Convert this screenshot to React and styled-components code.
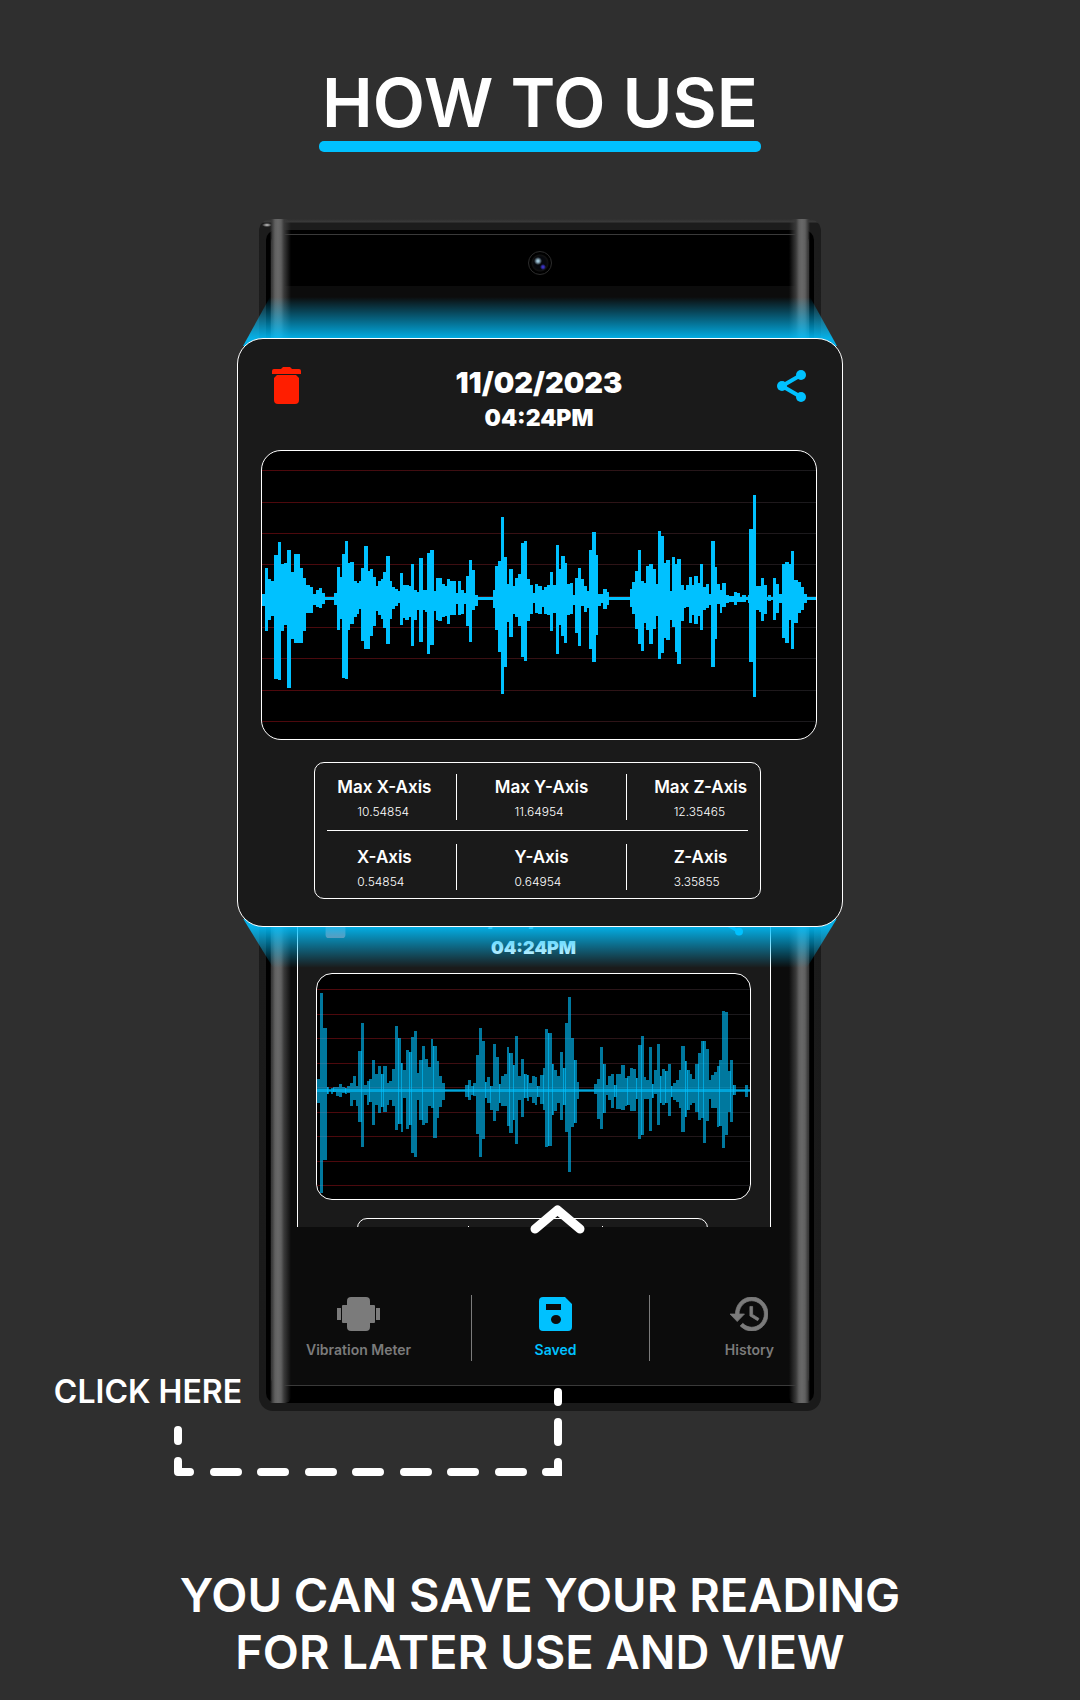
import React from "react";
import styled, { createGlobalStyle, css } from "styled-components";

const CYAN = "#00c1ff";

const GlobalStyle = createGlobalStyle`
  *, *::before, *::after { box-sizing: border-box; }
  body {
    margin: 0;
    background: #2f2f2f;
    color: #fff;
    font-family: Inter, "Liberation Sans", sans-serif;
  }
  h1, h2, p, dl, dd { margin: 0; }
`;

/* Each sample: left edge, top, bottom. The trace is centred on y = 475. */
const READING = [
  [93,462,498],[105,384,573],[114,417,540],[123,423,528],[132,345,717],[144,306,720],[153,372,573],[162,369,555],
  [171,330,744],[183,396,597],[192,342,609],[210,384,609],[219,414,573],[228,435,519],[240,441,519],[249,462,495],
  [258,450,501],[267,444,504],[276,459,492],[285,471,480],[312,459,495],[321,381,570],[330,411,537],[336,342,714],
  [345,303,717],[354,369,570],[361,366,552],[372,423,531],[381,429,522],[387,423,507],[393,384,603],[402,318,627],
  [414,393,627],[420,387,588],[429,411,558],[438,438,513],[444,423,525],[453,417,537],[459,396,564],[468,348,612],
  [480,423,537],[486,441,507],[495,447,498],[504,453,489],[510,399,555],[519,435,534],[525,435,540],[537,438,531],
  [543,372,618],[552,450,540],[561,456,510],[567,354,606],[579,450,510],[585,450,516],[591,339,642],[600,330,615],
  [612,453,513],[618,414,540],[624,414,543],[636,432,531],[645,438,528],[651,417,552],[660,423,525],[678,459,492],
  [684,423,525],[693,450,522],[702,459,492],[708,408,558],[717,360,606],[726,390,510],[735,465,498],[744,471,480],
  [789,450,504],[795,378,570],[804,363,636],[813,231,762],[822,351,681],[831,432,546],[837,387,591],[849,438,522],
  [855,414,531],[864,402,558],[873,309,651],[882,303,663],[891,417,543],[900,435,522],[909,459,489],[915,432,519],
  [924,438,522],[933,450,501],[939,441,522],[948,435,525],[957,396,573],[966,435,519],[975,315,642],[984,387,555],
  [990,348,588],[999,348,609],[1002,369,609],[1008,432,525],[1017,429,522],[1026,465,495],[1032,414,579],[1041,384,618],
  [1050,417,498],[1059,438,516],[1068,453,504],[1074,330,627],[1083,276,666],[1095,345,585],[1101,462,498],[1110,462,489],
  [1116,447,507],[1128,456,495],[1134,471,480],[1197,447,501],[1203,426,522],[1212,393,567],[1221,330,612],[1230,423,633],
  [1239,429,549],[1245,378,570],[1254,372,612],[1266,387,567],[1275,432,528],[1281,273,657],[1290,288,639],[1299,369,594],
  [1305,360,600],[1317,453,540],[1323,351,561],[1332,372,636],[1338,357,672],[1350,435,543],[1359,450,504],[1365,435,501],
  [1374,411,549],[1383,435,525],[1389,408,552],[1401,429,528],[1407,372,570],[1416,441,510],[1425,432,504],[1434,462,495],
  [1440,303,681],[1452,381,597],[1458,432,492],[1467,450,519],[1473,429,501],[1485,465,489],[1494,468,486],[1509,456,495],
  [1518,459,486],[1527,471,486],[1533,465,486],[1545,471,480],[1551,465,489],[1554,267,666],[1566,165,771],[1575,438,510],
  [1584,438,516],[1590,414,543],[1599,435,522],[1608,471,480],[1611,465,483],[1620,471,480],[1626,414,540],[1635,432,519],
  [1644,462,489],[1653,372,594],[1662,366,609],[1674,372,540],[1680,333,627],[1689,420,549],[1701,426,519],[1710,441,510],
  [1719,462,489],[1728,471,480],[1761,471,480],
];

/* Same layout, centred on y = 541. */
const OLDER_READING = [
  [261,507,579],[270,249,849],[279,354,750],[291,531,552],[297,541,543],[303,534,552],[309,531,546],[318,531,558],
  [327,522,561],[336,531,549],[345,534,552],[351,528,549],[360,519,588],[369,498,570],[378,528,588],[384,423,636],
  [393,339,711],[402,525,555],[411,513,585],[417,507,576],[426,450,645],[435,492,585],[444,468,609],[453,492,591],
  [459,468,606],[471,519,585],[477,513,570],[486,477,588],[495,348,660],[504,384,642],[513,459,666],[519,480,564],
  [528,420,657],[537,426,645],[543,381,729],[552,363,741],[561,489,570],[567,450,630],[576,408,645],[585,447,639],
  [594,471,588],[603,387,594],[609,408,684],[621,453,624],[627,498,591],[636,519,570],[645,541,543],[705,525,561],
  [714,510,570],[723,528,555],[729,519,558],[738,435,672],[747,354,741],[756,393,687],[765,516,564],[771,501,579],
  [780,528,600],[789,402,633],[798,441,603],[807,522,579],[813,498,588],[822,492,588],[831,411,648],[837,429,669],
  [849,465,630],[855,378,702],[864,498,570],[873,447,621],[882,492,564],[891,495,573],[897,519,561],[906,498,579],
  [915,501,585],[921,528,561],[930,495,582],[939,474,600],[945,357,711],[954,369,708],[966,462,615],[972,480,603],
  [981,498,579],[990,426,630],[999,474,585],[1005,339,666],[1014,261,786],[1023,384,651],[1032,450,639],[1041,516,567],
  [1047,541,543],[1092,522,552],[1101,507,627],[1110,411,657],[1119,462,609],[1128,525,555],[1134,498,570],[1143,492,594],
  [1152,525,561],[1158,492,597],[1173,465,600],[1185,504,588],[1191,498,585],[1200,474,603],[1209,477,603],[1218,504,567],
  [1224,405,687],[1233,378,675],[1242,501,567],[1248,510,567],[1257,411,663],[1266,522,564],[1272,480,552],[1281,402,645],
  [1290,498,579],[1296,477,585],[1305,483,579],[1314,462,618],[1323,528,561],[1329,519,570],[1338,510,576],[1347,480,594],
  [1353,408,666],[1365,453,621],[1371,480,600],[1380,492,585],[1386,507,579],[1395,462,606],[1404,429,630],[1413,393,624],
  [1419,393,699],[1428,417,633],[1437,510,567],[1443,495,594],[1452,486,594],[1461,468,651],[1467,450,648],[1476,303,714],
  [1485,306,675],[1494,483,606],[1500,450,636],[1509,525,555],[1518,541,543],[1545,525,561],[1554,541,543],[1560,541,543],
];

/* Left edges of the strips where two neighbouring samples overlap. */
const OVERLAPS = new Set([
  291,309,345,393,417,453,459,504,513,537,543,576,609,714,729,765,780,807,837,849,882,891,921,939,954,966,999,1005,1032,
  1119,1152,1158,1191,1218,1233,1266,1290,1305,1323,1365,1371,1404,1419,1467,1500,1509,
]);

const tracePath = (samples) =>
  samples
    .slice(0, -1)
    .map(([x, top, bottom], i) => `M${x} ${top}H${samples[i + 1][0]}V${bottom}H${x}Z`)
    .join("");

const overlapPath = (samples) =>
  samples
    .map(([x, top, bottom], i) => {
      if (!i || !OVERLAPS.has(x)) return "";
      const [, prevTop, prevBottom] = samples[i - 1];
      return `M${x} ${Math.max(top, prevTop)}h3V${Math.min(bottom, prevBottom)}h-3Z`;
    })
    .join("");

const Page = styled.main`
  display: flex;
  flex-direction: column;
  align-items: center;
  padding: 64px 0 20px;
  overflow-x: hidden;
`;

const Title = styled.h1`
  padding: 0 3px;
  font-size: 68px;
  font-weight: 600;
  line-height: 77px;
  &::after {
    content: "";
    display: block;
    height: 11px;
    margin: 0 -3px;
    border-radius: 5px;
    background: ${CYAN};
  }
`;

const Stage = styled.section`
  position: relative;
  display: flex;
  justify-content: center;
  width: 100%;
  margin-top: 67px;
`;

const rail = css`
  content: "";
  position: absolute;
  top: 0;
  bottom: 8px;
  width: 25px;
  background: linear-gradient(90deg, transparent 4px, #3a3a3a 6px, #606060 9px, #686868 12px, #606060 15px, #3a3a3a 18px, transparent);
  border-radius: 6px;
`;

const Phone = styled.div`
  position: relative;
  width: 562px;
  max-width: 100%;
  padding: 11px 7px 8px;
  border-radius: 12px 12px 14px 14px;
  background:
    radial-gradient(ellipse 5px 2px at 8px 6px, #d0d0d0, transparent),
    linear-gradient(#2f2f2f, #3a3a3a 3px, #1c1c1c 4px, #1a1a1a);
  &::before { ${rail} left: 7px; }
  &::after { ${rail} right: 7px; transform: scaleX(-1); }
`;

const Face = styled.div`
  padding: 4px 5px 17px;
  border-radius: 10px;
  background: #000;
`;

const Screen = styled.div`
  border: 1px solid #3a3a3a;
  border-radius: 8px;
  background: #0c0c0c;
  overflow: hidden;
`;

const CameraBar = styled.div`
  display: flex;
  justify-content: center;
  align-items: center;
  height: 51px;
  padding-top: 4px;
  background: #000;
`;

const Camera = styled.span`
  width: 24px;
  height: 24px;
  border: 1px solid #2c2c2c;
  border-radius: 50%;
  background:
    radial-gradient(circle at 9px 9px, #9fc4d8 1px, transparent 4px),
    radial-gradient(circle at 14px 15px, #3a32c0 1px, transparent 3px),
    radial-gradient(circle, #06080d 6px, #111 8px, #000 9px);
`;

const SavedList = styled.div`
  height: 941px;
  padding: 599px 37px 0 25px;
  overflow: hidden;
`;

const Card = styled.article`
  position: relative;
  padding: ${(p) => (p.$compact ? "21px 19px 22px 18px" : "28px 25px 27px 23px")};
  border: 1px solid #fff;
  border-radius: ${(p) => (p.$compact ? 20 : 26)}px;
  background: #1a1a1a;
`;

const CardHeader = styled.header`
  display: flex;
  justify-content: space-between;
  align-items: flex-start;
  padding: ${(p) => (p.$compact ? "0 8px 14px" : "0 11px 18px")};
`;

const IconButton = styled.button`
  display: block;
  padding: 0;
  border: 0;
  background: none;
  color: ${(p) => p.$color};
  cursor: pointer;
  svg {
    display: block;
    width: ${(p) => (p.$compact ? 23 : 29)}px;
    height: ${(p) => (p.$compact ? 31 : 37)}px;
  }
`;

const Stamp = styled.div`
  display: flex;
  flex-direction: column;
  align-items: center;
  gap: 5px;
  font-weight: 900;
`;

const DateText = styled.h2`
  font-size: ${(p) => (p.$compact ? 23 : 29)}px;
  line-height: ${(p) => (p.$compact ? 25 : 32)}px;
  font-weight: inherit;
`;

const TimeText = styled.p`
  font-size: ${(p) => (p.$compact ? 18 : 23)}px;
  line-height: ${(p) => (p.$compact ? 22 : 28)}px;
`;

const Plot = styled.div`
  border: 1px solid #fff;
  border-radius: ${(p) => (p.$compact ? 16 : 20)}px;
  background: #000;
  overflow: hidden;
  svg { display: block; width: 100%; height: auto; }
`;

const Axes = styled.dl`
  width: ${(p) => (p.$compact ? 351 : 447)}px;
  max-width: 100%;
  margin: ${(p) => (p.$compact ? "18px 0 0 41px" : "22px 0 0 53px")};
  padding: ${(p) => (p.$compact ? "7px 9px" : "11px 12px 8px")};
  border: 1px solid #fff;
  border-radius: 10px;
`;

const AxisRow = styled.div`
  display: grid;
  grid-template-columns: 130fr 171fr 121fr;
  min-height: 36px;
  & + & {
    margin-top: 10px;
    padding-top: 13px;
    border-top: 1px solid #fff;
  }
`;

const Axis = styled.div`
  display: flex;
  flex-direction: column;
  align-items: center;
  gap: 4px;
  white-space: nowrap;
  &:not(:last-child) { border-right: 1px solid #fff; }
  &:first-child { padding-right: 14px; }
  &:last-child { padding-left: 26px; }
`;

const AxisName = styled.dt`
  font-size: 17px;
  line-height: 26px;
  font-weight: 600;
`;

const AxisValue = styled.dd`
  width: 54px;
  font-size: 12px;
  line-height: 16px;
  font-weight: 300;
`;

const Nav = styled.nav`
  display: grid;
  grid-template-columns: 199fr 178fr 159fr;
  padding: 68px 0 24px;
`;

const NavItem = styled.a`
  display: flex;
  flex-direction: column;
  align-items: ${(p) => p.$align};
  height: 66px;
  padding: ${(p) => (p.$active ? "2px 39px 0 29px" : "2px 34px 0")};
  color: ${(p) => (p.$active ? CYAN : "#7b7b7b")};
  font-size: 14px;
  line-height: 18px;
  font-weight: 600;
  text-decoration: none;
  & + & { border-left: 1px solid #7b7b7b; }
`;

const NavLabel = styled.span`
  display: flex;
  flex-direction: column;
  align-items: center;
  gap: 10px;
  white-space: nowrap;
  svg { height: 34px; }
`;

const Popup = styled.div`
  position: absolute;
  top: 119px;
  width: 606px;
  max-width: 100%;
`;

const Glow = styled.div`
  position: absolute;
  left: 6px;
  right: 6px;
  height: 49px;
  ${(p) =>
    p.$below
      ? css`
          bottom: -41px;
          background: linear-gradient(rgba(0, 193, 255, 0.88) 8px, rgba(0, 193, 255, 0));
          clip-path: polygon(0 0, 100% 0, calc(100% - 30px) 100%, 30px 100%);
        `
      : css`
          top: -41px;
          background: linear-gradient(rgba(0, 193, 255, 0), rgba(0, 193, 255, 0.88) 41px);
          clip-path: polygon(27px 0, calc(100% - 27px) 0, 100% 100%, 0 100%);
        `}
`;

const Callout = styled.div`
  position: absolute;
  top: 983px;
  left: calc(50% - 486px);
`;

const CalloutLabel = styled.p`
  position: absolute;
  top: 170px;
  right: 352px;
  font-size: 32px;
  line-height: 40px;
  font-weight: 600;
  white-space: nowrap;
`;

const Caption = styled.p`
  margin-top: 155px;
  font-size: 47px;
  line-height: 57px;
  font-weight: 600;
  text-align: center;
`;

const TrashIcon = () => (
  <svg viewBox="0 0 29 37" preserveAspectRatio="none" fill="currentColor" aria-hidden="true">
    <path d="M2 2H9L11 0H18L20 2H27Q29 2 29 4V7H0V4Q0 2 2 2Z" />
    <path d="M5 8H24L27 11V33Q27 37 23 37H6Q2 37 2 33V11Z" />
  </svg>
);

const ShareIcon = () => (
  <svg viewBox="0 0 29 37" fill="currentColor" aria-hidden="true">
    <path d="M24 8L5 19L24 30" fill="none" stroke="currentColor" strokeWidth="4" />
    <circle cx="24" cy="8" r="5" />
    <circle cx="5" cy="19" r="5" />
    <circle cx="24" cy="30" r="5" />
  </svg>
);

const VibrationIcon = () => (
  <svg width="43" viewBox="0 0 43 34" fill="currentColor" aria-hidden="true">
    <rect x="10" width="23" height="34" rx="4" />
    <rect x="5" y="8" width="33" height="18" rx="1" />
    <rect y="11" width="4" height="12" />
    <rect x="39" y="11" width="4" height="12" />
  </svg>
);

const SaveIcon = () => (
  <svg width="33" viewBox="0 0 33 34" fill="currentColor" fillRule="evenodd" aria-hidden="true">
    <path d="M4 0H26L33 7V30Q33 34 29 34H4Q0 34 0 30V4Q0 0 4 0ZM7 7V13H22V7ZM17 18A5 4.500 0 1 0 17 27A5 4.500 0 1 0 17 18Z" />
  </svg>
);

const HistoryIcon = () => (
  <svg width="38" viewBox="1 3 21 18" preserveAspectRatio="none" fill="currentColor" stroke="currentColor" strokeWidth="0.400" aria-hidden="true">
    <path d="M13 3a9 9 0 0 0-9 9H1l3.890 3.890.07.14L9 12H6c0-3.870 3.130-7 7-7s7 3.130 7 7-3.130 7-7 7c-1.930 0-3.680-.79-4.940-2.060l-1.420 1.420A8.954 8.954 0 0 0 13 21a9 9 0 0 0 0-18zm-1 5v5l4.280 2.540.72-1.210-3.500-2.080V8H12z" />
  </svg>
);

function Waveform({ compact }) {
  const id = compact ? "grid-small" : "grid-large";
  const left = compact ? 258 : 93;
  const right = compact ? 1563 : 1761;
  const first = compact ? 238 : 91;
  const pitch = compact ? 73.5 : 94;
  const samples = compact ? OLDER_READING : READING;
  return (
    <svg
      viewBox={compact ? "261 192 1299 675" : "96 33 1659 861"}
      shapeRendering="crispEdges"
      role="img"
      aria-label="Vibration reading"
    >
      <defs>
        <linearGradient id={id}>
          <stop offset="0" stopColor="#50080c" />
          <stop offset="1" stopColor="#1a1a1d" />
        </linearGradient>
      </defs>
      {Array.from({ length: 9 }, (_, i) => (
        <rect key={i} x={left} y={Math.round((first + i * pitch) / 3) * 3} width={right - left} height="3" fill={`url(#${id})`} />
      ))}
      {compact ? (
        <g fill={CYAN}>
          <path d={tracePath(samples)} fillOpacity="0.620" />
          <path d={overlapPath(samples)} fillOpacity="0.620" />
          <rect x={left} y="537" width={right - left} height="9" fillOpacity="0.620" />
        </g>
      ) : (
        <path d={tracePath(samples)} fill={CYAN} />
      )}
    </svg>
  );
}

const ROWS = [
  [["Max X-Axis", "10.54854"], ["Max Y-Axis", "11.64954"], ["Max Z-Axis", "12.35465"]],
  [["X-Axis", "0.54854"], ["Y-Axis", "0.64954"], ["Z-Axis", "3.35855"]],
];

function ReadingCard({ compact }) {
  return (
    <Card $compact={compact}>
      <CardHeader $compact={compact}>
        <IconButton $compact={compact} $color={compact ? "#ff5a4a" : "#ff1e00"} aria-label="Delete">
          <TrashIcon />
        </IconButton>
        <Stamp>
          <DateText $compact={compact}>11/02/2023</DateText>
          <TimeText $compact={compact}>04:24PM</TimeText>
        </Stamp>
        <IconButton $compact={compact} $color={CYAN} aria-label="Share">
          <ShareIcon />
        </IconButton>
      </CardHeader>
      <Plot $compact={compact}>
        <Waveform compact={compact} />
      </Plot>
      <Axes $compact={compact}>
        {ROWS.map((row, i) => (
          <AxisRow key={i}>
            {row.map(([name, value]) => (
              <Axis key={name}>
                {!compact && <AxisName>{name}</AxisName>}
                {!compact && <AxisValue>{value}</AxisValue>}
              </Axis>
            ))}
          </AxisRow>
        ))}
      </Axes>
    </Card>
  );
}

export default function App() {
  return (
    <Page>
      <GlobalStyle />
      <Title>HOW TO USE</Title>
      <Stage>
        <Phone>
          <Face>
            <Screen>
              <CameraBar>
                <Camera />
              </CameraBar>
              <SavedList>
                <ReadingCard compact />
              </SavedList>
              <Nav>
                <NavItem href="#meter" $align="flex-start">
                  <NavLabel><VibrationIcon />Vibration Meter</NavLabel>
                </NavItem>
                <NavItem href="#saved" $align="center" $active>
                  <NavLabel><SaveIcon />Saved</NavLabel>
                </NavItem>
                <NavItem href="#history" $align="flex-end">
                  <NavLabel><HistoryIcon />History</NavLabel>
                </NavItem>
              </Nav>
            </Screen>
          </Face>
        </Phone>
        <Popup>
          <Glow />
          <Glow $below />
          <ReadingCard />
        </Popup>
        <Callout>
          <CalloutLabel>CLICK HERE</CalloutLabel>
          <svg width="540" height="280" viewBox="0 0 540 280" fill="none" stroke="#fff" strokeWidth="8" strokeLinecap="round" aria-hidden="true">
            <path d="M481 27L503.500 8L526 27" strokeWidth="9" strokeLinejoin="round" />
            <path d="M504 190V200M504 220V240M504 260V270" />
            <path d="M492 270H504" />
            <path d="M500 266H508V274H500Z" fill="#fff" stroke="none" />
            <path d="M124 228V239M124 259V270H136" strokeLinejoin="round" />
            <path d="M160 270H184M207 270H231M255 270H279M302 270H326M350 270H374M397 270H421M445 270H469" />
          </svg>
        </Callout>
      </Stage>
      <Caption>
        YOU CAN SAVE YOUR READING
        <br />
        FOR LATER USE AND VIEW
      </Caption>
    </Page>
  );
}
